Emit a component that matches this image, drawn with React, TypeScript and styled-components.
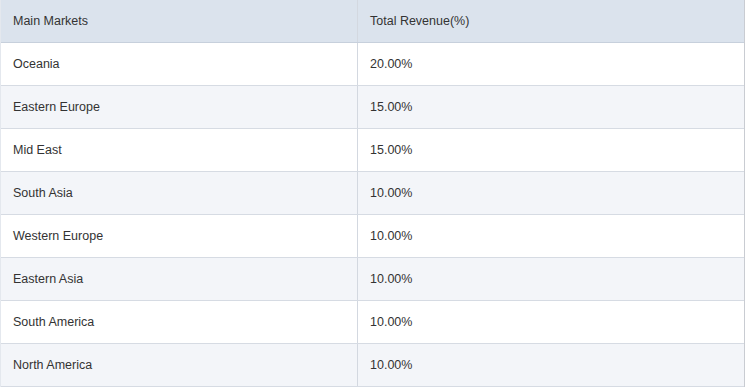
import styled, { createGlobalStyle } from 'styled-components';

const GlobalStyle = createGlobalStyle`
  body {
    margin: 0;
    background: #ffffff;
    font-family: "Liberation Sans", Arial, sans-serif;
  }
`;

const Table = styled.div`
  width: 745px;
  box-sizing: border-box;
  border-left: 1px solid #e4e8ee;
  border-right: 1px solid #c9ccd2;
`;

const Row = styled.div<{ $head?: boolean; $alt?: boolean }>`
  display: grid;
  grid-template-columns: 357px 1fr;
  height: 43px;
  box-sizing: border-box;
  border-bottom: 1px solid ${({ $head }) => ($head ? '#c7d0dc' : '#d6dbe3')};
  background-color: ${({ $head, $alt }) =>
    $head ? '#dbe3ed' : $alt ? '#f3f5f9' : '#ffffff'};
`;

const Cell = styled.div<{ $first?: boolean }>`
  display: flex;
  align-items: center;
  padding-left: ${({ $first }) => ($first ? '12px' : '12px')};
  font-size: 12.5px;
  color: #333;
  border-right: ${({ $first }) => ($first ? '1px solid #d3d8e0' : 'none')};
`;

const markets: [string, string][] = [
  ['Oceania', '20.00%'],
  ['Eastern Europe', '15.00%'],
  ['Mid East', '15.00%'],
  ['South Asia', '10.00%'],
  ['Western Europe', '10.00%'],
  ['Eastern Asia', '10.00%'],
  ['South America', '10.00%'],
  ['North America', '10.00%'],
];

export default function App() {
  return (
    <>
      <GlobalStyle />
      <Table>
        <Row $head>
          <Cell $first>Main Markets</Cell>
          <Cell>Total Revenue(%)</Cell>
        </Row>
        {markets.map(([name, value], i) => (
          <Row key={name} $alt={i % 2 === 1}>
            <Cell $first>{name}</Cell>
            <Cell>{value}</Cell>
          </Row>
        ))}
      </Table>
    </>
  );
}
